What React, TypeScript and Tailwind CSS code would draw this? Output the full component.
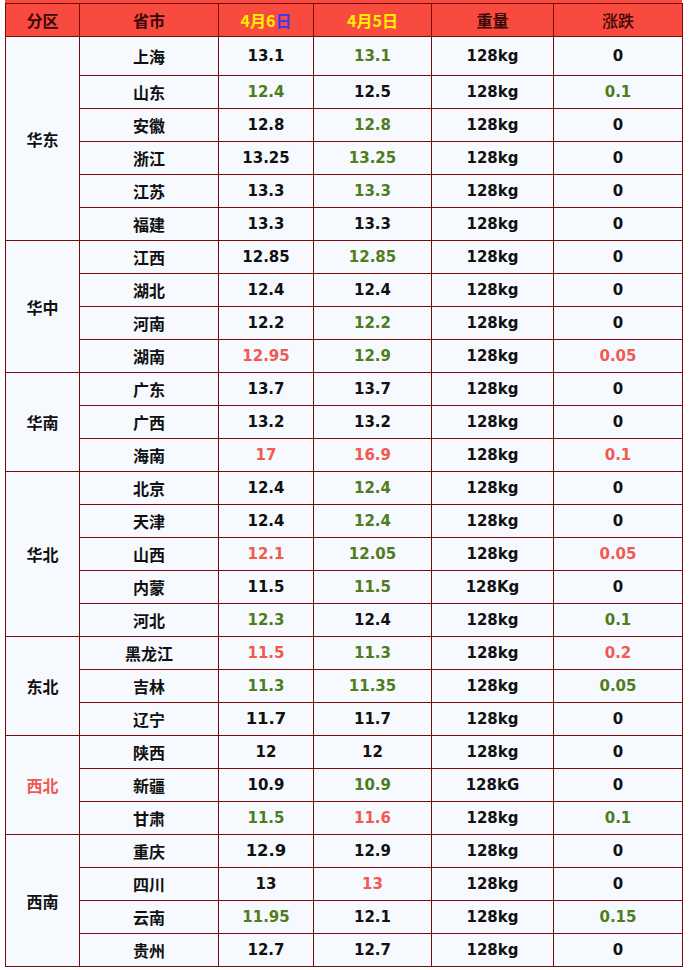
type Tone = 'k' | 'g' | 'r';

interface Row {
  city: string;
  d6: [string, Tone];
  d5: [string, Tone];
  weight: string;
  change: [string, Tone];
  big6?: boolean;
}

interface Region {
  name: string;
  red?: boolean;
  rows: Row[];
}

const r = (
  city: string,
  d6: string,
  t6: Tone,
  d5: string,
  t5: Tone,
  change: string,
  tc: Tone,
  weight = '128kg',
  big6 = false
): Row => ({ city, d6: [d6, t6], d5: [d5, t5], weight, change: [change, tc], big6 });

const regions: Region[] = [
  {
    name: '华东',
    rows: [
      r('上海', '13.1', 'k', '13.1', 'g', '0', 'k'),
      r('山东', '12.4', 'g', '12.5', 'k', '0.1', 'g'),
      r('安徽', '12.8', 'k', '12.8', 'g', '0', 'k'),
      r('浙江', '13.25', 'k', '13.25', 'g', '0', 'k'),
      r('江苏', '13.3', 'k', '13.3', 'g', '0', 'k'),
      r('福建', '13.3', 'k', '13.3', 'k', '0', 'k'),
    ],
  },
  {
    name: '华中',
    rows: [
      r('江西', '12.85', 'k', '12.85', 'g', '0', 'k'),
      r('湖北', '12.4', 'k', '12.4', 'k', '0', 'k'),
      r('河南', '12.2', 'k', '12.2', 'g', '0', 'k'),
      r('湖南', '12.95', 'r', '12.9', 'g', '0.05', 'r'),
    ],
  },
  {
    name: '华南',
    rows: [
      r('广东', '13.7', 'k', '13.7', 'k', '0', 'k'),
      r('广西', '13.2', 'k', '13.2', 'k', '0', 'k'),
      r('海南', '17', 'r', '16.9', 'r', '0.1', 'r'),
    ],
  },
  {
    name: '华北',
    rows: [
      r('北京', '12.4', 'k', '12.4', 'g', '0', 'k'),
      r('天津', '12.4', 'k', '12.4', 'g', '0', 'k'),
      r('山西', '12.1', 'r', '12.05', 'g', '0.05', 'r'),
      r('内蒙', '11.5', 'k', '11.5', 'g', '0', 'k', '128Kg'),
      r('河北', '12.3', 'g', '12.4', 'k', '0.1', 'g'),
    ],
  },
  {
    name: '东北',
    rows: [
      r('黑龙江', '11.5', 'r', '11.3', 'g', '0.2', 'r'),
      r('吉林', '11.3', 'g', '11.35', 'g', '0.05', 'g'),
      r('辽宁', '11.7', 'k', '11.7', 'k', '0', 'k', '128kg', true),
    ],
  },
  {
    name: '西北',
    red: true,
    rows: [
      r('陕西', '12', 'k', '12', 'k', '0', 'k'),
      r('新疆', '10.9', 'k', '10.9', 'g', '0', 'k', '128kG'),
      r('甘肃', '11.5', 'g', '11.6', 'r', '0.1', 'g'),
    ],
  },
  {
    name: '西南',
    rows: [
      r('重庆', '12.9', 'k', '12.9', 'k', '0', 'k', '128kg', true),
      r('四川', '13', 'k', '13', 'r', '0', 'k'),
      r('云南', '11.95', 'g', '12.1', 'k', '0.15', 'g'),
      r('贵州', '12.7', 'k', '12.7', 'k', '0', 'k'),
    ],
  },
];

const toneClass: Record<Tone, string> = {
  k: 'text-[#111111]',
  g: 'text-[#4f7c1c]',
  r: 'text-[#f05a50]',
};

const cell = 'border border-[#7a0a0a] bg-[#f6faff] text-center align-middle p-0';
const num = "font-['DejaVu_Sans',sans-serif] font-bold text-[15px]";
const cjk = "font-['Noto_Sans_CJK_SC',sans-serif] font-semibold text-[16px] text-[#111111]";

export default function App() {
  let first = true;
  return (
    <div className="bg-white min-h-[970px] w-[689px]">
      <div className="ml-[5px] w-[677px] h-[3px] bg-[#f84a3e]" />
      <table className="ml-[5px] w-[677px] table-fixed border-collapse">
        <colgroup>
          <col className="w-[74px]" />
          <col className="w-[139px]" />
          <col className="w-[95px]" />
          <col className="w-[118px]" />
          <col className="w-[122px]" />
          <col className="w-[129px]" />
        </colgroup>
        <thead>
          <tr className="h-[33px] bg-[#f84a3e] font-['Noto_Sans_CJK_SC',sans-serif] text-[16px]">
            <th className="border border-[#7a0a0a] text-[#3a0808] font-bold">分区</th>
            <th className="border border-[#7a0a0a] text-[#3a0808] font-bold">省市</th>
            <th className="border border-[#7a0a0a] font-bold">
              <span className="text-[#ffee00]">4月6</span>
              <span className="text-[#3b3bf0]">日</span>
            </th>
            <th className="border border-[#7a0a0a] text-[#ffee00] font-bold">4月5日</th>
            <th className="border border-[#7a0a0a] text-[#3a0808] font-semibold">重量</th>
            <th className="border border-[#7a0a0a] text-[#3a0808] font-medium">涨跌</th>
          </tr>
        </thead>
        <tbody>
          {regions.map((reg) =>
            reg.rows.map((row, i) => {
              const h = first ? 'h-[39px]' : 'h-[33px]';
              first = false;
              return (
                <tr key={reg.name + row.city} className={h}>
                  {i === 0 && (
                    <td
                      rowSpan={reg.rows.length}
                      className={`${cell} font-['Noto_Sans_CJK_SC',sans-serif] font-semibold text-[16px] ${
                        reg.red ? 'text-[#f05a50]' : 'text-[#111111]'
                      }`}
                    >
                      {reg.name}
                    </td>
                  )}
                  <td className={`${cell} ${cjk}`}>{row.city}</td>
                  <td className={`${cell} ${num} ${toneClass[row.d6[1]]} ${row.big6 ? 'text-[16.5px]' : ''}`}>
                    {row.d6[0]}
                  </td>
                  <td className={`${cell} ${num} ${toneClass[row.d5[1]]}`}>{row.d5[0]}</td>
                  <td className={`${cell} ${num} text-[#111111]`}>{row.weight}</td>
                  <td className={`${cell} ${num} ${toneClass[row.change[1]]}`}>{row.change[0]}</td>
                </tr>
              );
            })
          )}
        </tbody>
      </table>
    </div>
  );
}
